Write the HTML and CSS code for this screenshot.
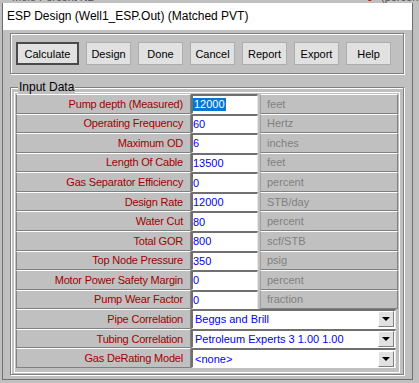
FILE: index.html
```html
<!DOCTYPE html>
<html lang="en">
<head>
  <meta charset="UTF-8">
  <title>ESP Design (Well1_ESP.Out) (Matched PVT)</title>
  <link rel="stylesheet" href="styles.css">
</head>
<body>
  <div class="desk">
    <div class="behind">
      <span class="b-name">Mole Percent N2</span>
      <span class="b-val">0</span>
      <span class="b-unit">(percent)</span>
    </div>

    <div class="window">
      <div class="titlebar">ESP Design (Well1_ESP.Out) (Matched PVT)</div>

      <div class="client">
        <div class="btn-panel">
          <button class="btn default">Calculate</button>
          <button class="btn">Design</button>
          <button class="btn">Done</button>
          <button class="btn">Cancel</button>
          <button class="btn">Report</button>
          <button class="btn">Export</button>
          <button class="btn">Help</button>
        </div>

        <div class="group">
          <span class="legend">Input Data</span>
          <div class="grid">
            <div class="row">
              <div class="lbl">Pump depth (Measured)</div>
              <div class="edit"><span class="sel">12000</span></div>
              <div class="unit">feet</div>
            </div>
            <div class="row">
              <div class="lbl">Operating Frequency</div>
              <div class="edit">60</div>
              <div class="unit">Hertz</div>
            </div>
            <div class="row">
              <div class="lbl">Maximum OD</div>
              <div class="edit">6</div>
              <div class="unit">inches</div>
            </div>
            <div class="row">
              <div class="lbl">Length Of Cable</div>
              <div class="edit">13500</div>
              <div class="unit">feet</div>
            </div>
            <div class="row">
              <div class="lbl">Gas Separator Efficiency</div>
              <div class="edit">0</div>
              <div class="unit">percent</div>
            </div>
            <div class="row">
              <div class="lbl">Design Rate</div>
              <div class="edit">12000</div>
              <div class="unit">STB/day</div>
            </div>
            <div class="row">
              <div class="lbl">Water Cut</div>
              <div class="edit">80</div>
              <div class="unit">percent</div>
            </div>
            <div class="row">
              <div class="lbl">Total GOR</div>
              <div class="edit">800</div>
              <div class="unit">scf/STB</div>
            </div>
            <div class="row">
              <div class="lbl">Top Node Pressure</div>
              <div class="edit">350</div>
              <div class="unit">psig</div>
            </div>
            <div class="row">
              <div class="lbl">Motor Power Safety Margin</div>
              <div class="edit">0</div>
              <div class="unit">percent</div>
            </div>
            <div class="row">
              <div class="lbl">Pump Wear Factor</div>
              <div class="edit">0</div>
              <div class="unit">fraction</div>
            </div>
            <div class="row">
              <div class="lbl">Pipe Correlation</div>
              <div class="combo"><span class="combo-text">Beggs and Brill</span><span class="drop"></span></div>
            </div>
            <div class="row">
              <div class="lbl">Tubing Correlation</div>
              <div class="combo"><span class="combo-text">Petroleum Experts 3 1.00 1.00</span><span class="drop"></span></div>
            </div>
            <div class="row">
              <div class="lbl">Gas DeRating Model</div>
              <div class="combo"><span class="combo-text">&lt;none&gt;</span><span class="drop"></span></div>
            </div>
          </div>
        </div>
      </div>
    </div>
  </div>
</body>
</html>
```

FILE: styles.css
```css
body { margin: 0; background: #c0c0c0; font-family: "Liberation Sans", Arial, sans-serif; font-size: 11px; overflow: hidden; }
.desk { width: 419px; height: 383px; overflow: hidden; }

/* the app window lying behind the dialog */
.behind { height: 3px; overflow: hidden; display: flex; color: #505050; }
.behind span { margin-top: -9px; line-height: 12px; }
.b-name { margin-left: 12px; }
.b-val { margin-left: auto; color: #c00000; }
.b-unit { margin-left: 8px; margin-right: -6px; }

.window { margin-left: 2px; width: 409px; border: 1px solid #6e6e6e; border-top: 0; background: #c0c0c0; }
.titlebar { height: 27px; line-height: 27px; padding-left: 4px; background: #fff; color: #000; font-size: 12px; }
.client { padding: 3px 7px 4px 7px; }

/* button strip */
.btn-panel { display: flex; gap: 7px; width: 394px; box-sizing: border-box; padding: 8px 5px; border: 1px solid #808080; box-shadow: 1px 1px 0 #fff, inset 1px 1px 0 #fff; }
.btn { width: 45px; height: 23px; padding: 0; background: #e1e1e1; border: 1px solid #adadad; border-radius: 0; font-family: inherit; font-size: 11px; color: #000; }
.btn.default { width: 63px; border: 2px solid #4a4a4a; }

/* input data group */
.group { position: relative; margin-top: 13px; width: 394px; box-sizing: border-box; padding: 4px 3px 1px 3px; border: 1px solid #808080; box-shadow: 1px 1px 0 #fff, inset 1px 1px 0 #fff; }
.legend { position: absolute; top: -8px; left: 7px; padding: 0 1px; background: #c0c0c0; font-size: 12px; line-height: 14px; }
.grid { border: 1px solid #fff; padding: 1px 1px 4px 1px; }
.row { display: flex; height: 19.57px; }
.row > div { box-sizing: border-box; height: 100%; }

.lbl { width: 175px; padding-right: 7px; color: #a00000; letter-spacing: -0.2px; border-top: 1px solid #fff; border-left: 1px solid #808080; border-right: 1px solid #808080; border-bottom: 1px solid #808080; display: flex; align-items: center; justify-content: flex-end; }
.edit { width: 67px; background: #fff; color: #0000ff; border-top: 2px solid #707070; border-left: 2px solid #707070; border-right: 1px solid #e8e8e8; border-bottom: 1px solid #fff; display: flex; align-items: center; }
.sel { background: #0078d7; color: #fff; padding: 0 1px; line-height: 13px; }
.unit { width: 138px; margin-left: 2px; padding-left: 6px; color: #808080; border-top: 1px solid #fff; border-left: 1px solid #a0a0a0; border-right: 1px solid #808080; border-bottom: 1px solid #808080; display: flex; align-items: center; }

.combo { width: 205px; background: #fff; color: #0000ff; border-top: 2px solid #707070; border-left: 2px solid #707070; border-right: 1px solid #e8e8e8; border-bottom: 1px solid #fff; display: flex; align-items: center; }
.combo-text { flex: 1; padding-left: 2px; }
.drop { width: 16px; height: 16px; box-sizing: border-box; background: #e1e1e1; border-top: 1px solid #fff; border-left: 1px solid #fff; border-right: 1px solid #808080; border-bottom: 1px solid #808080; display: flex; align-items: center; justify-content: center; margin-right: 1px; }
.drop::after { content: ""; border-left: 4px solid transparent; border-right: 4px solid transparent; border-top: 4px solid #000; }
```
